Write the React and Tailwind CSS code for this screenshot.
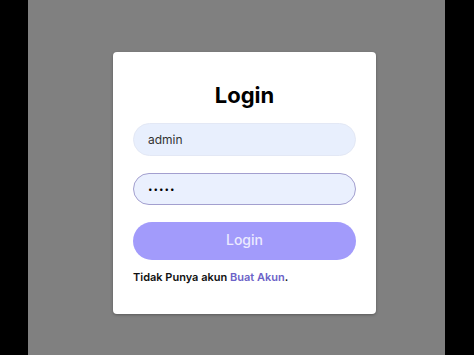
export default function App() {
  return (
    <div className="flex h-[355px] w-[474px] bg-black" style={{ fontFamily: 'Inter, "Noto Sans", sans-serif' }}>
      <main className="ml-[28px] h-full w-[417px] bg-[#808080] pl-[85px] pt-[52px]">
        <div className="flex h-[262px] w-[263px] flex-col rounded-[4px] bg-white px-[20px] pt-[27px] shadow-[0_1px_3px_rgba(0,0,0,0.3)]">
          <h1 className="text-center text-[22px] font-bold leading-[32px] text-black">Login</h1>
          <input
            readOnly
            value="admin"
            className="mt-[12px] h-[33px] w-full rounded-full border border-[#e3e8f5] bg-[#e8effd] px-[14px] text-[12px] text-[#333] outline-none"
          />
          <input
            readOnly
            type="password"
            value="admin"
            className="mt-[17px] h-[32px] w-full rounded-full border-[1.5px] border-[#a39fcf] bg-[#eaf0fe] px-[14px] text-[8px] tracking-[1px] text-black outline-none"
          />
          <button className="mt-[17px] h-[38px] w-full rounded-full bg-[#a29bfb] pb-[3px] text-[14px] font-medium text-[#eceaff]">
            Login
          </button>
          <p className="mt-[9px] text-[11px] font-semibold leading-[16px] text-[#111]">
            Tidak Punya akun <a className="text-[#6c63c8]" href="#">Buat Akun</a>.
          </p>
        </div>
      </main>
    </div>
  )
}
